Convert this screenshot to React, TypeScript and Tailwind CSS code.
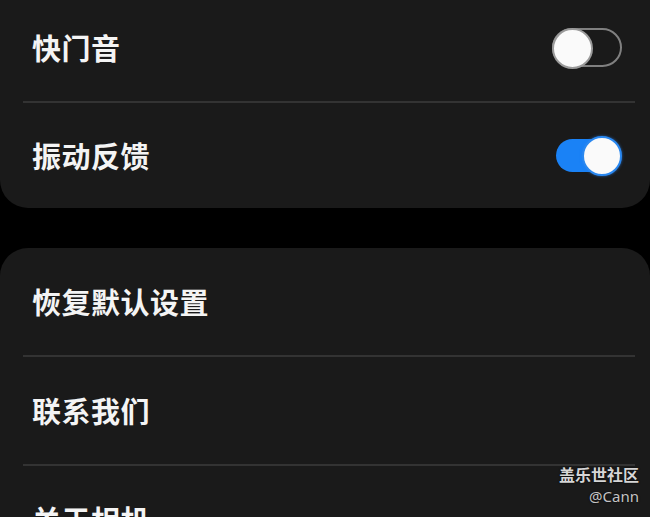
// Camera settings – lower part of the list (One UI dark)

import type { ReactNode } from "react";

const font = { fontFamily: '"Noto Sans CJK SC", "Noto Sans", sans-serif' };

function Toggle({ on }: { on: boolean }) {
  if (on) {
    return (
      <div className="relative w-[69px] h-[42px] flex items-center">
        <div className="ml-[3px] w-[60px] h-[33px] rounded-full bg-[#1a82f6]" />
        <div className="absolute right-0 top-[1px] w-[40px] h-[40px] rounded-full bg-[#fafafa] border-[2px] border-[#2a88f0] shadow-[0_0_3px_rgba(40,130,240,0.7)]" />
      </div>
    );
  }
  return (
    <div className="relative w-[70px] h-[42px] flex items-center">
      <div className="w-[70px] h-[39px] rounded-full border-[2px] border-[#808080]" />
      <div className="absolute left-0 top-[1px] w-[41px] h-[41px] rounded-full bg-[#fafafa] border-[2px] border-[#9a9a9a]" />
    </div>
  );
}

function Row({ label, right, height = "h-[107px]" }: { label: string; right?: ReactNode; height?: string }) {
  return (
    <div className={`flex items-center justify-between pl-[32px] pr-[28px] ${height}`}>
      <span className="text-[29px] font-semibold text-[#f4f4f4] leading-none tracking-[0.5px]">{label}</span>
      {right}
    </div>
  );
}

function Divider() {
  return <div className="ml-[23px] mr-[15px] h-[2px] bg-[#333333]" />;
}

export default function App() {
  return (
    <div className="relative w-[650px] h-[517px] bg-black overflow-hidden" style={font}>
      <div className="flex flex-col">
        <div className="-mt-[6px] bg-[#1a1a1a] rounded-b-[28px]">
          <Row label="快门音" right={<Toggle on={false} />} />
          <Divider />
          <Row label="振动反馈" right={<Toggle on={true} />} height="h-[105px]" />
        </div>

        <div className="mt-[40px] bg-[#1a1a1a] rounded-[28px]">
          <Row label="恢复默认设置" />
          <Divider />
          <Row label="联系我们" />
          <Divider />
          <Row label="关于相机" />
        </div>
      </div>

      {/* watermark */}
      <div className="absolute right-[11px] bottom-[13px] flex flex-col items-end leading-none [text-shadow:0_0_2px_rgba(0,0,0,0.9)]">
        <span className="text-[16px] font-bold text-[#d6d6d6]">盖乐世社区</span>
        <span className="mt-[7px] text-[15px] text-[#c4c4c4]" style={{ fontFamily: '"Noto Sans", sans-serif' }}>@Cann</span>
      </div>
    </div>
  );
}
